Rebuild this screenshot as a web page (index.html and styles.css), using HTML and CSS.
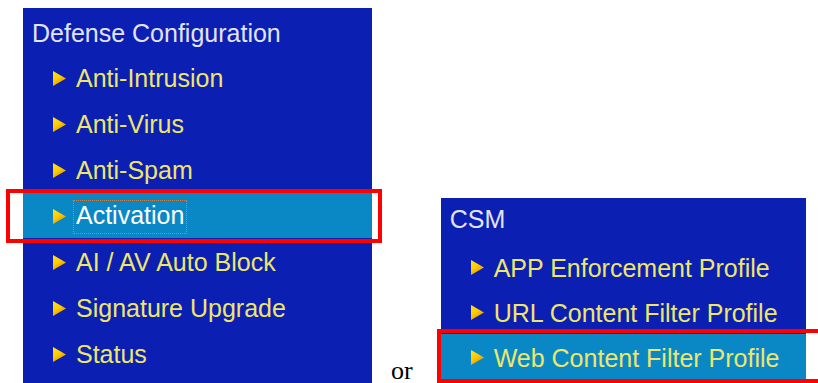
FILE: index.html
```html
<!DOCTYPE html>
<html lang="en">
<head>
    <meta charset="UTF-8">
    <title>Defense Configuration / CSM menu</title>
    <link rel="stylesheet" href="styles.css">
</head>
<body>
    <div class="page">

        <div class="menu menu-defense">
            <div class="menu-title">Defense Configuration</div>
            <ul>
                <li><svg class="arrow" viewBox="0 0 13 15"><use href="#tri"/></svg><span>Anti-Intrusion</span></li>
                <li><svg class="arrow" viewBox="0 0 13 15"><use href="#tri"/></svg><span>Anti-Virus</span></li>
                <li><svg class="arrow" viewBox="0 0 13 15"><use href="#tri"/></svg><span>Anti-Spam</span></li>
                <li class="selected marked-left"><svg class="arrow" viewBox="0 0 13 15"><use href="#tri"/></svg><span class="focused">Activation</span></li>
                <li><svg class="arrow" viewBox="0 0 13 15"><use href="#tri"/></svg><span>AI / AV Auto Block</span></li>
                <li><svg class="arrow" viewBox="0 0 13 15"><use href="#tri"/></svg><span>Signature Upgrade</span></li>
                <li><svg class="arrow" viewBox="0 0 13 15"><use href="#tri"/></svg><span>Status</span></li>
            </ul>
        </div>

        <div class="or">or</div>

        <div class="menu menu-csm">
            <div class="menu-title">CSM</div>
            <ul>
                <li><svg class="arrow" viewBox="0 0 13 15"><use href="#tri"/></svg><span>APP Enforcement Profile</span></li>
                <li><svg class="arrow" viewBox="0 0 13 15"><use href="#tri"/></svg><span>URL Content Filter Profile</span></li>
                <li class="selected marked-right"><svg class="arrow" viewBox="0 0 13 15"><use href="#tri"/></svg><span>Web Content Filter Profile</span></li>
            </ul>
        </div>

    </div>

    <!-- shared arrow shape -->
    <svg width="0" height="0" class="defs">
        <defs>
            <linearGradient id="tri-fill" x1="0" y1="0" x2="0.6" y2="1">
                <stop offset="0" stop-color="#ffe21a"/>
                <stop offset="0.5" stop-color="#ffcc00"/>
                <stop offset="1" stop-color="#e09400"/>
            </linearGradient>
            <polygon id="tri" points="0,0 13,7.5 0,15" fill="url(#tri-fill)"/>
        </defs>
    </svg>
</body>
</html>
```

FILE: styles.css
```css
html, body {
    overflow: hidden;
}
body {
    margin: 0;
    background-color: #fff;
    font-family: "Liberation Sans", Arial, sans-serif;
}
.page {
    display: flex;
    align-items: flex-start;
    padding: 8px 0 0 23px;
}
.defs {
    position: absolute;
}
.menu {
    background-color: #0b1fb2;
    font-size: 25px;
}
.menu ul {
    list-style: none;
    margin: 0;
    padding: 0;
}
.menu-defense {
    width: 349px;
    padding-bottom: 20px;
}
.menu-csm {
    width: 365px;
    margin-top: 190px;
    margin-left: 28px;
}
.menu-title {
    color: #e2e4f6;
    padding-left: 9px;
}
.menu-defense .menu-title {
    height: 46px;
    line-height: 44px;
    padding-top: 3px;
    box-sizing: border-box;
}
.menu-csm .menu-title {
    height: 46px;
    line-height: 42px;
    padding-bottom: 3px;
    box-sizing: border-box;
}
.menu li {
    position: relative;
    display: flex;
    align-items: center;
    height: 46px;
    padding: 3px 0 0 30px;
    box-sizing: border-box;
    color: #eee66a;
    line-height: 1;
}
.menu-csm li {
    height: 45px;
}
.arrow {
    width: 13px;
    height: 15px;
    margin-right: 10px;
    margin-top: -1px;
    flex-shrink: 0;
}
.menu li.selected {
    background-color: #0a88c6;
}
.focused {
    color: #fff;
    border: 1px dotted #d0803c;
    margin-left: -3px;
    padding: 0 2px 4px 2px;
    line-height: 28px;
}
/* red annotation frames */
.marked-left::after,
.marked-right::after {
    content: "";
    position: absolute;
    border: 4px solid #ff0000;
}
.marked-left::after {
    left: -17px;
    right: -10px;
    top: -3px;
    bottom: -5px;
}
.marked-right::after {
    left: -4px;
    right: -30px;
    top: -5px;
    bottom: -4px;
}
.or {
    font-family: "Liberation Serif", "Times New Roman", serif;
    font-size: 26px;
    line-height: 22px;
    margin-top: 352px;
    margin-left: 19px;
}
```
